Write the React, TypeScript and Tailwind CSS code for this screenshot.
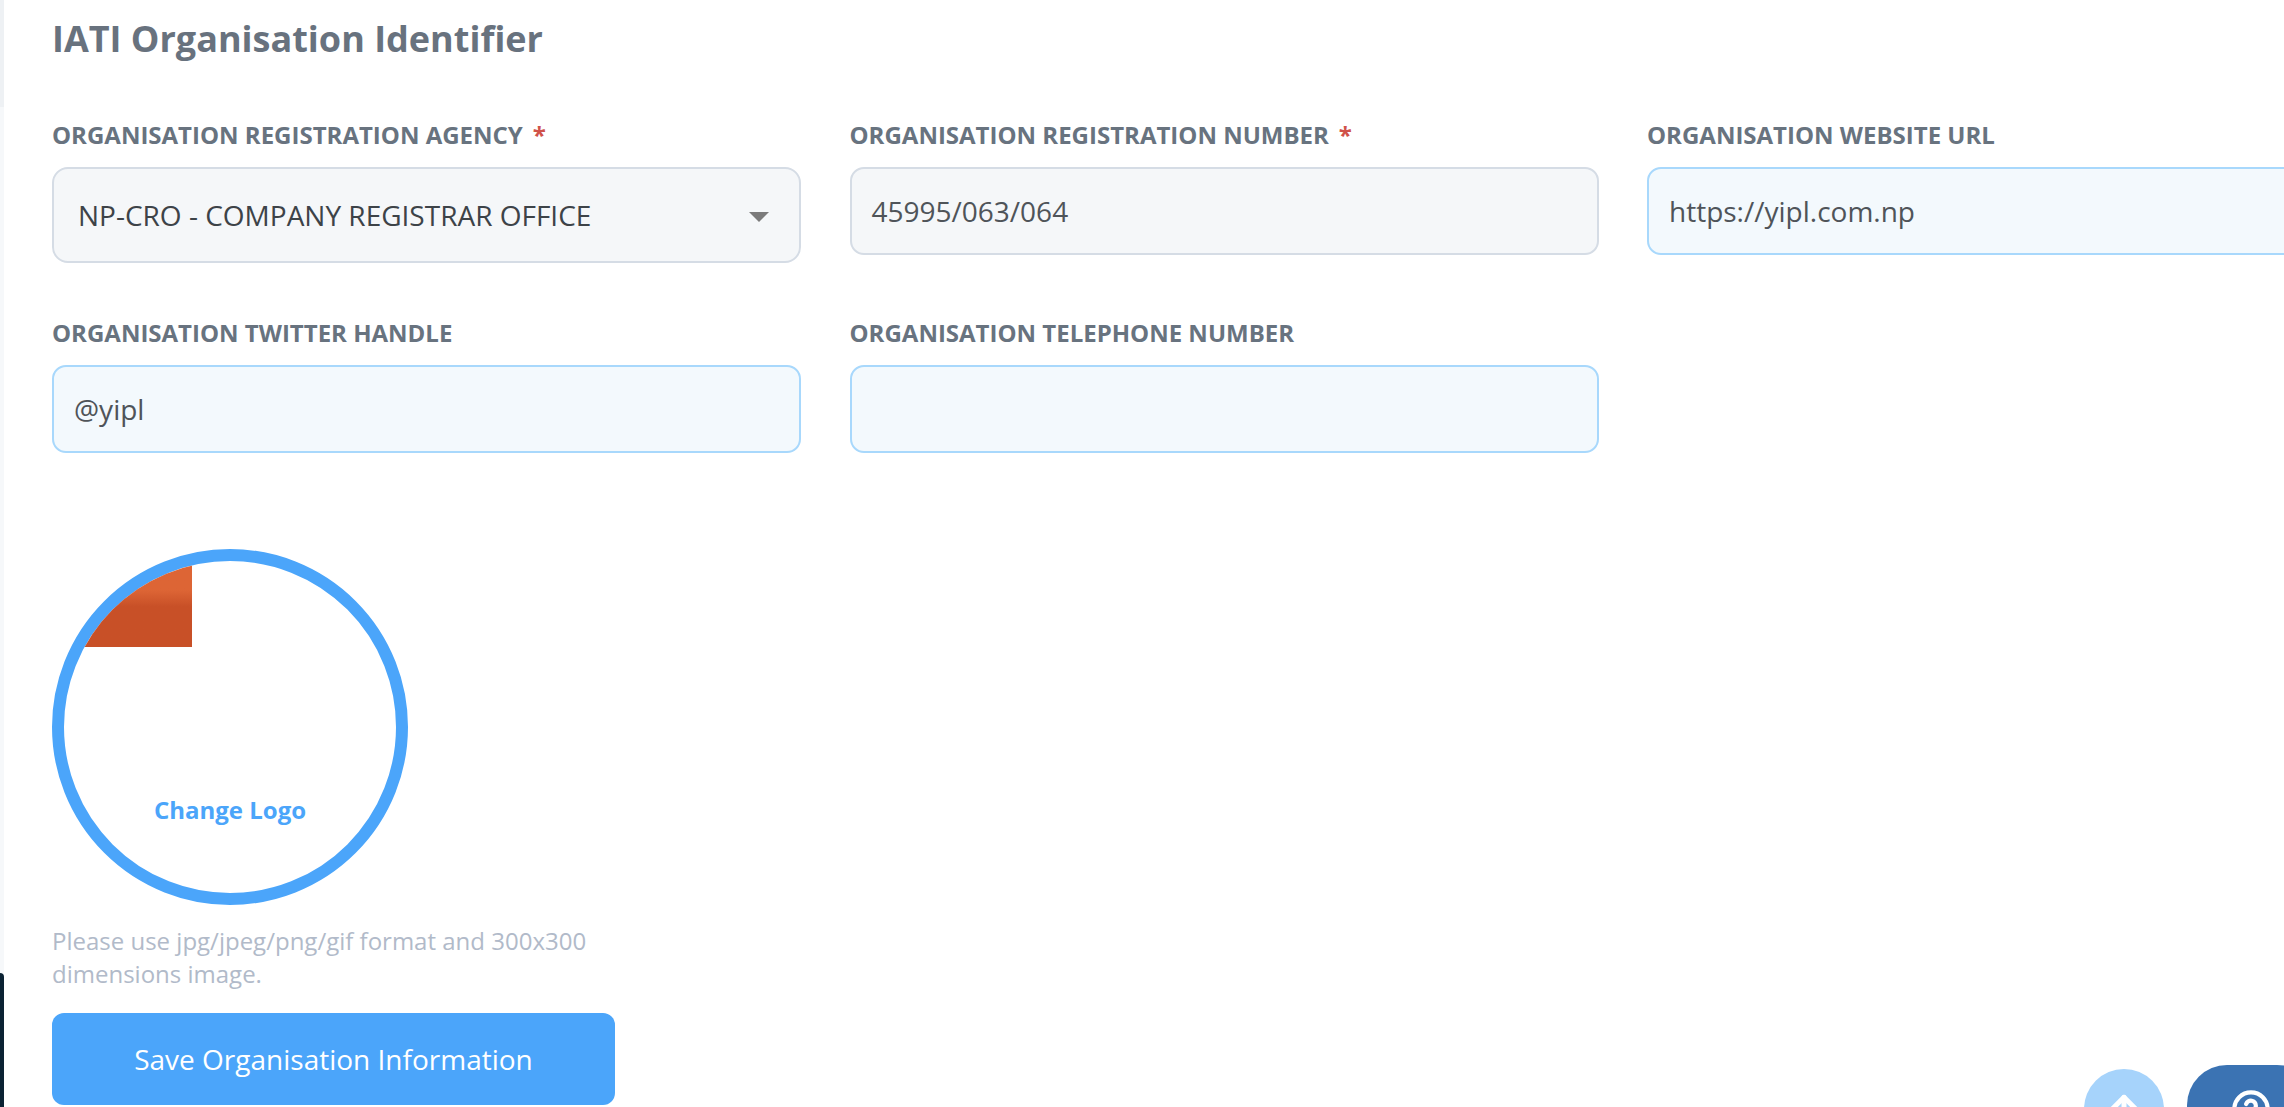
import React from 'react';
import { ArrowUp, CircleHelp } from 'lucide-react';

const font = { fontFamily: '"Open Sans", sans-serif' };

const labelClass = 'text-[24px] font-bold uppercase leading-[28px] text-[#68737f] mb-[18px]';
const boxClass = 'flex items-center h-[88px] w-full rounded-[14px] border-2 px-[20px] text-[28px] text-[#4f5459]';

const Label: React.FC<{ text: string; required?: boolean }> = ({ text, required }) => (
  <div className={labelClass}>
    {text}
    {required && <span className="ml-[10px] text-[#d0524a]">*</span>}
  </div>
);

const App: React.FC = () => {
  return (
    <div style={font} className="flex h-[1107px] w-full overflow-hidden bg-white relative">
      {/* sliver of the sidebar */}
      <div className="flex w-[4px] shrink-0 flex-col bg-[#f6f8fa]">
        <div className="h-[107px] bg-[#eef1f4]" />
        <div className="flex-1" />
        <div className="h-[134px] rounded-tr-[6px] bg-[#0b2233]" />
      </div>

      <div className="min-w-0 flex-1 pl-[48px]">
        <h2 className="pt-[16px] text-[36px] font-bold leading-[46px] text-[#68727e]">IATI Organisation Identifier</h2>

        <div className="mt-[59px] grid grid-cols-[749px_749px_749px] gap-x-[48.5px]">
          <div>
            <Label text="Organisation Registration Agency" required />
            <div className="flex h-[96px] items-center justify-between rounded-[16px] border-2 border-[#d5dce5] bg-[#f5f7f9] pl-[24px] pr-[30px] text-[28px] text-[#3d4348]">
              <span>NP-CRO - COMPANY REGISTRAR OFFICE</span>
              <span className="mt-[3px] h-0 w-0 border-x-[10px] border-t-[10px] border-x-transparent border-t-[#7b7b7b]" />
            </div>
          </div>
          <div>
            <Label text="Organisation Registration Number" required />
            <div className={`${boxClass} border-[#d5dce5] bg-[#f5f7f9]`}>45995/063/064</div>
          </div>
          <div>
            <Label text="Organisation Website URL" />
            <div className={`${boxClass} border-[#a8d8fc] bg-[#f3f9fd]`}>https://yipl.com.np</div>
          </div>
        </div>

        <div className="mt-[56px] grid grid-cols-[749px_749px_749px] gap-x-[48.5px]">
          <div>
            <Label text="Organisation Twitter Handle" />
            <div className={`${boxClass} border-[#a8d8fc] bg-[#f3f9fd]`}>@yipl</div>
          </div>
          <div>
            <Label text="Organisation Telephone Number" />
            <div className={`${boxClass} border-[#a8d8fc] bg-[#f3f9fd]`} />
          </div>
        </div>

        <div className="relative mt-[96px] h-[356px] w-[356px] overflow-hidden rounded-full border-[12px] border-[#4ba5fa] bg-white">
          <div className="h-[86px] w-[128px] bg-gradient-to-b from-[#dd6535] from-[34%] to-[#c85027] to-[53%]" />
          <span className="absolute inset-x-0 top-[233px] text-center text-[24px] font-bold leading-[32px] text-[#4ba5fa]">Change Logo</span>
        </div>

        <p className="mt-[19px] w-[563px] text-[24px] leading-[33px] text-[#b1bac9]">
          Please use jpg/jpeg/png/gif format and 300x300 dimensions image.
        </p>

        <button className="mt-[23px] flex h-[92px] w-[563px] items-center justify-center rounded-[12px] bg-[#4ba5fa] text-[28px] text-white">
          Save Organisation Information
        </button>
      </div>

      <div className="absolute left-[2084px] top-[1069px] flex h-[80px] w-[80px] justify-center rounded-full bg-[#a6d3fb] pt-[20px]">
        <ArrowUp className="h-[40px] w-[40px] text-white" strokeWidth={3} />
      </div>
      <div className="absolute left-[2187px] top-[1065px] flex h-[84px] w-[130px] justify-center rounded-[40px] bg-[#3b73b3] pt-[24px] pr-[2px]">
        <CircleHelp className="h-[40px] w-[40px] text-white" strokeWidth={2.5} />
      </div>
    </div>
  );
};

export default App;
